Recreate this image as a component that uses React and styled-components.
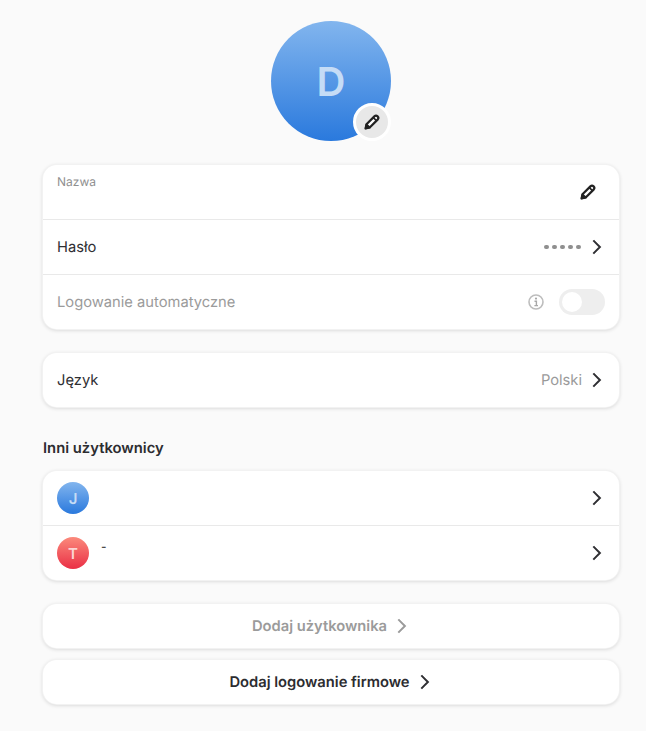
import React from "react";
import styled, { createGlobalStyle } from "styled-components";

const Global = createGlobalStyle`
  html, body { margin: 0; padding: 0; background: #fafafa; }
  body { font-family: Inter, "Noto Sans", sans-serif; color: #2c2c30; text-rendering: geometricPrecision; }
  * { box-sizing: border-box; }
`;
const Page = styled.div`
  width: 646px; height: 731px; overflow: hidden; background: #fafafa;
  padding: 21px 27px 0 43px; display: flex; flex-direction: column;
`;
const AvatarWrap = styled.div`
  position: relative; width: 120px; height: 120px; align-self: center; margin-bottom: 24px;
`;
const Avatar = styled.div`
  width: ${p => p.$size}px; height: ${p => p.$size}px; border-radius: 50%;
  flex: none; display: flex; align-items: center; justify-content: center;
  background: ${p => p.$red ? "linear-gradient(180deg,#fb8a7c 0%,#ea2f45 100%)" : "linear-gradient(180deg,#82b5ee 0%,#2a79dd 100%)"};
  color: ${p => p.$red ? "#fbd5d3" : "#c5dcf6"};
  font-size: ${p => p.$font}px; font-weight: 600;
`;
const EditBadge = styled.div`
  position: absolute; right: 0; bottom: 0; width: 38px; height: 38px; border-radius: 50%;
  background: #e8e8e8; border: 3px solid #fff; display: flex; align-items: center; justify-content: center;
`;
const Card = styled.div`
  background: #fff; border-radius: 14px; margin-bottom: ${p => p.$mb || 0}px;
  box-shadow: 0 0 0 1px #f2f2f2, 0 1px 4px rgba(0,0,0,.18);
  overflow: hidden; flex: none;
`;
const Row = styled.div`
  height: 54px; padding: 0 14px; display: flex; align-items: center; gap: 12px;
  & + & { border-top: 1px solid #e9e9e9; height: 55px; }
`;
const NameRow = styled(Row)`align-items: flex-start; padding-top: 9px;`;
const SmallLabel = styled.span`font-size: 12px; line-height: 15px; color: #8f8f8f; flex: 1;`;
const Label = styled.span`
  font-size: 14.72px; line-height: 18px; margin-top: -1px;
  color: ${p => p.$muted ? "#9b9b9b" : "#2f2f33"}; flex: 1;
`;
const Value = styled.span`font-size: 14.72px; line-height: 18px; margin-top: -1px; color: #9a9a9a; margin-right: -7px;`;
const Dots = styled.span`display: flex; gap: 3.2px; margin-right: -6px;`;
const Dot = styled.i`width: 4.8px; height: 4.8px; border-radius: 50%; background: #8f8f8f; display: block;`;
const Toggle = styled.div`
  width: 46px; height: 26px; border-radius: 13px; background: #eee; padding: 3px;
`;
const Knob = styled.div`width: 20px; height: 20px; border-radius: 50%; background: #fff;`;
const Heading = styled.h2`
  margin: 0 0 14px; font-size: 14.8px; line-height: 18px; font-weight: 600; color: #2c2c30;
`;
const UserRow = styled(Row)`position: relative;`;
const Dash = styled.span`flex: 1; font-size: 12px; line-height: 12px; color: #222; align-self: flex-start; margin-top: 15px;`;
const Spacer = styled.span`flex: 1;`;
const Action = styled(Card)`
  height: 44px; display: flex; align-items: center; justify-content: center; gap: 5px;
  font-size: 14.72px; font-weight: 600; color: ${p => p.$muted ? "#9b9b9b" : "#2c2c30"};
`;
const IconBox = styled.span`display: flex; flex: none; margin: ${p => p.$m || 0};`;

const Pencil = ({ size = 18 }) => (
  <svg width={size} height={size} viewBox="0 0 18 18" fill="none">
    <path d="M2.6 15.4 L3.5 11.3 L11.4 3.4 A2 2 0 0 1 14.6 6.6 L6.7 14.5 Z" fill="#fff" stroke="#222" strokeWidth="2.2" strokeLinejoin="round" />
    <path d="M10.4 4.6 L13.4 7.6" stroke="#222" strokeWidth="1.6" />
    <path d="M2.6 15.4 L3.5 11.3 L6.7 14.5 Z" fill="#222" stroke="#222" strokeWidth="1.8" strokeLinejoin="round" />
  </svg>
);
const Chevron = ({ color = "#2f2f33" }) => (
  <svg width="18" height="18" viewBox="0 0 18 18" fill="none">
    <path d="M6.3 2.4 L12.9 9 L6.3 15.6" stroke={color} strokeWidth="2" strokeLinecap="butt" strokeLinejoin="miter" />
  </svg>
);
const Info = () => (
  <svg width="18" height="18" viewBox="0 0 18 18" fill="none">
    <circle cx="9" cy="9" r="7" stroke="#bdbdbd" strokeWidth="1.6" />
    <circle cx="9" cy="5.6" r="1.1" fill="#a8a8a8" />
    <path d="M7.5 8.2 H9.4 V12.4 M7.4 12.6 H11" stroke="#a8a8a8" strokeWidth="1.4" />
  </svg>
);

export default function App() {
  return (
    <Page>
      <Global />
      <AvatarWrap>
        <Avatar $size={120} $font={40}>D</Avatar>
        <EditBadge><Pencil /></EditBadge>
      </AvatarWrap>
      <Card $mb={24}>
        <NameRow>
          <SmallLabel>Nazwa</SmallLabel>
          <IconBox $m="9px 8px 0 0"><Pencil /></IconBox>
        </NameRow>
        <Row>
          <Label>Hasło</Label>
          <Dots><Dot /><Dot /><Dot /><Dot /><Dot /></Dots>
          <IconBox><Chevron /></IconBox>
        </Row>
        <Row>
          <Label $muted>Logowanie automatyczne</Label>
          <IconBox $m="0 2px 0 0"><Info /></IconBox>
          <Toggle><Knob /></Toggle>
        </Row>
      </Card>
      <Card $mb={32}>
        <Row>
          <Label>Język</Label>
          <Value>Polski</Value>
          <IconBox><Chevron /></IconBox>
        </Row>
      </Card>
      <Heading>Inni użytkownicy</Heading>
      <Card $mb={24}>
        <UserRow>
          <Avatar $size={32} $font={15}>J</Avatar>
          <Spacer />
          <IconBox><Chevron /></IconBox>
        </UserRow>
        <UserRow>
          <Avatar $size={32} $font={15} $red>T</Avatar>
          <Dash>-</Dash>
          <IconBox><Chevron /></IconBox>
        </UserRow>
      </Card>
      <Action $mb={12} $muted>
        Dodaj użytkownika
        <IconBox><Chevron color="#9b9b9b" /></IconBox>
      </Action>
      <Action>
        Dodaj logowanie firmowe
        <IconBox><Chevron /></IconBox>
      </Action>
    </Page>
  );
}
